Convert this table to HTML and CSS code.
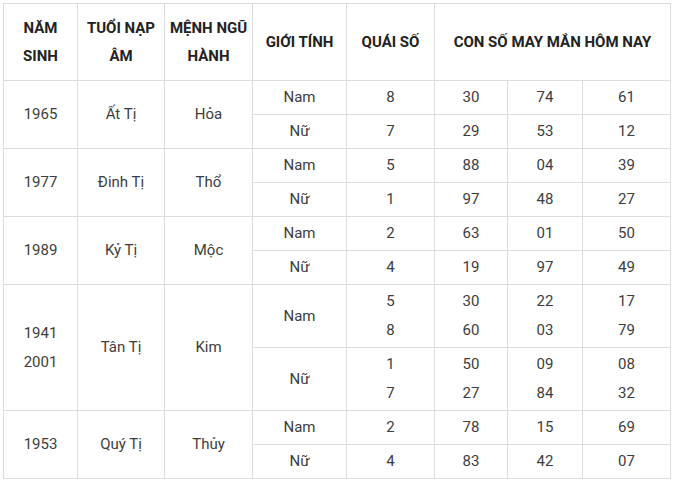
FILE: index.html
```html
<!DOCTYPE html>
<html lang="vi">
<head>
<meta charset="utf-8">
<link rel="stylesheet" href="styles.css">
</head>
<body>
<table class="luck">
  <colgroup>
    <col class="c1"><col class="c2"><col class="c3"><col class="c4"><col class="c5"><col class="c6"><col class="c7"><col class="c8">
  </colgroup>
  <thead>
    <tr class="head">
      <th>NĂM<br>SINH</th>
      <th>TUỔI NẠP<br>ÂM</th>
      <th>MỆNH NGŨ<br>HÀNH</th>
      <th>GIỚI TÍNH</th>
      <th>QUÁI SỐ</th>
      <th colspan="3">CON SỐ MAY MẮN HÔM NAY</th>
    </tr>
  </thead>
  <tbody>
    <tr class="r1"><td rowspan="2">1965</td><td rowspan="2">Ất Tị</td><td rowspan="2">Hỏa</td><td>Nam</td><td>8</td><td>30</td><td>74</td><td>61</td></tr>
    <tr class="r1"><td>Nữ</td><td>7</td><td>29</td><td>53</td><td>12</td></tr>
    <tr class="r1"><td rowspan="2">1977</td><td rowspan="2">Đinh Tị</td><td rowspan="2">Thổ</td><td>Nam</td><td>5</td><td>88</td><td>04</td><td>39</td></tr>
    <tr class="r1"><td>Nữ</td><td>1</td><td>97</td><td>48</td><td>27</td></tr>
    <tr class="r1"><td rowspan="2">1989</td><td rowspan="2">Kỷ Tị</td><td rowspan="2">Mộc</td><td>Nam</td><td>2</td><td>63</td><td>01</td><td>50</td></tr>
    <tr class="r1"><td>Nữ</td><td>4</td><td>19</td><td>97</td><td>49</td></tr>
    <tr class="r2"><td rowspan="2">1941<br>2001</td><td rowspan="2">Tân Tị</td><td rowspan="2">Kim</td><td>Nam</td><td>5<br>8</td><td>30<br>60</td><td>22<br>03</td><td>17<br>79</td></tr>
    <tr class="r2"><td>Nữ</td><td>1<br>7</td><td>50<br>27</td><td>09<br>84</td><td>08<br>32</td></tr>
    <tr class="r1"><td rowspan="2">1953</td><td rowspan="2">Quý Tị</td><td rowspan="2">Thủy</td><td>Nam</td><td>2</td><td>78</td><td>15</td><td>69</td></tr>
    <tr class="r1"><td>Nữ</td><td>4</td><td>83</td><td>42</td><td>07</td></tr>
  </tbody>
</table>
</body>
</html>
```

FILE: styles.css
```css
html, body {
  margin: 0;
  padding: 0;
  background: #fff;
}
body {
  padding: 3px 0 0 3px;
  font-family: Roboto, "Liberation Sans", sans-serif;
  font-size: 15px;
  color: #3d3d3d;
}
.luck {
  border-collapse: collapse;
  table-layout: fixed;
  width: 667px;
}
.c1 { width: 74px; }
.c2 { width: 87px; }
.c3 { width: 88px; }
.c4 { width: 94px; }
.c5 { width: 88px; }
.c6 { width: 73px; }
.c7 { width: 75px; }
.c8 { width: 88px; }
.luck th, .luck td {
  border: 1px solid #dddddd;
  padding: 0;
  text-align: center;
  vertical-align: middle;
}
.luck th {
  font-weight: bold;
  line-height: 28px;
  color: #222;
}
.luck td {
  line-height: 29px;
  font-weight: normal;
}
.head { height: 77px; }
.r1 { height: 34px; }
.r2 { height: 63px; }
```
